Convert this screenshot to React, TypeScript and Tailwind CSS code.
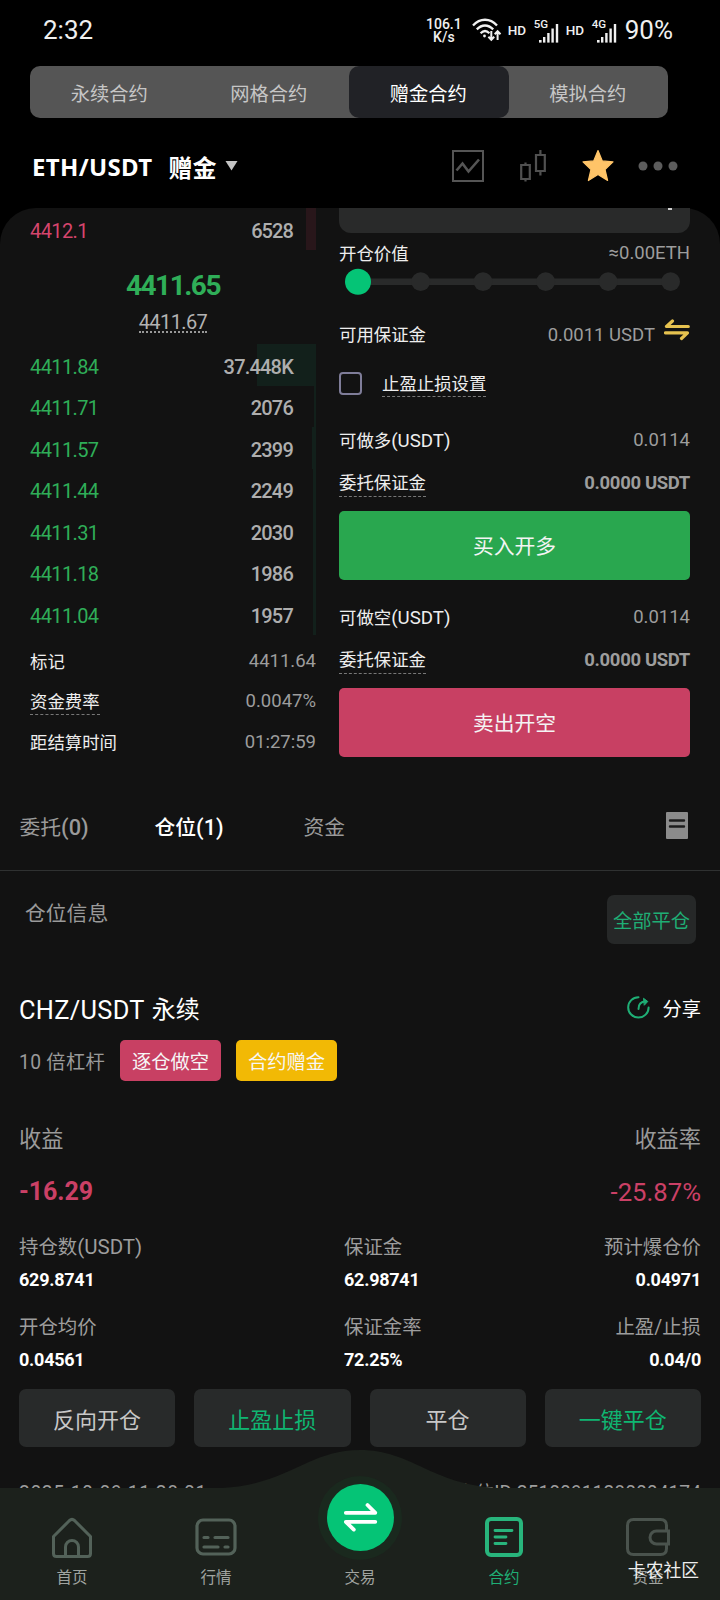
import type { ReactNode } from 'react';
import clsx from 'clsx';

const marketTabs = ['永续合约', '网格合约', '赠金合约', '模拟合约'];

const bids = [
  { price: '4411.84', amount: '37.448K', depth: 59 },
  { price: '4411.71', amount: '2076', depth: 2 },
  { price: '4411.57', amount: '2399', depth: 4 },
  { price: '4411.44', amount: '2249', depth: 3 },
  { price: '4411.31', amount: '2030', depth: 3 },
  { price: '4411.18', amount: '1986', depth: 3 },
  { price: '4411.04', amount: '1957', depth: 3 },
];

const positionActions = [
  { label: '反向开仓', green: false },
  { label: '止盈止损', green: true },
  { label: '平仓', green: false },
  { label: '一键平仓', green: true },
];

function SignalBars() {
  return (
    <svg className="absolute bottom-0 right-0" width="20" height="20" viewBox="0 0 20 20" fill="#f0f0f0">
      <rect x="0" y="17" width="2.6" height="2.6" />
      <rect x="4" y="14" width="2.4" height="5.6" />
      <rect x="8.2" y="10" width="2.4" height="9.6" />
      <rect x="12.4" y="5.5" width="2.4" height="14.1" />
      <rect x="16.8" y="1" width="2.4" height="18.6" />
    </svg>
  );
}

function StatusBar() {
  return (
    <div className="flex h-[66px] items-start justify-between pl-[43px] pr-[47px] pt-[15px] text-[#f0f0f0]">
      <span className="text-[26px] leading-[30px]">2:32</span>
      <div className="flex h-[30px] items-center">
        <div className="mr-[10px] pt-[1px] text-center text-[14px] font-medium leading-[12.5px]">
          <div>106.1</div>
          <div>K/s</div>
        </div>
        <svg className="mr-[6px]" width="30" height="24" viewBox="0 0 30 24" fill="none" stroke="#f0f0f0" strokeWidth="2.3">
          <path d="M1 7.5C8-.2 18-.2 25 7.5" />
          <path d="M4.8 11.4c5-5.2 11.4-5.2 16.4 0" />
          <path d="M8.6 15.2c2.8-2.8 6-2.8 8.8 0" />
          <circle cx="12.5" cy="18" r="1.4" fill="#f0f0f0" stroke="none" />
          <path d="M19.3 13v8.5M16.4 18.8l2.9 3 2.9-3M25.6 22v-8.5M22.7 16.2l2.9-3 2.9 3" strokeWidth="2" />
        </svg>
        <span className="w-[19px] text-[13.5px] font-medium">HD</span>
        <div className="relative ml-[7px] h-[25px] w-[25px]">
          <span className="absolute left-0 top-0 text-[11.5px] font-medium leading-[13px]">5G</span>
          <SignalBars />
        </div>
        <span className="ml-[7px] w-[19px] text-[13.5px] font-medium">HD</span>
        <div className="relative ml-[7px] h-[25px] w-[25px]">
          <span className="absolute left-0 top-0 text-[11.5px] font-medium leading-[13px]">4G</span>
          <SignalBars />
        </div>
        <span className="ml-[8px] text-[26px] leading-[30px]">90%</span>
      </div>
    </div>
  );
}

function MarketTabs() {
  return (
    <div className="ml-[30px] flex h-[52px] w-[638px] rounded-[10px] bg-[#555555]">
      {marketTabs.map((tab) => (
        <div
          key={tab}
          className={clsx(
            'flex flex-1 items-center justify-center rounded-[10px] pr-[1px] pt-[6px] text-[19.3px]',
            tab === '赠金合约' ? 'bg-[#212226] text-white' : 'text-[#c6c6c6]',
          )}
        >
          {tab}
        </div>
      ))}
    </div>
  );
}

function PairHeader() {
  return (
    <div className="flex h-[90px] items-center pl-[32px] pr-[42px] pt-[5px]">
      <span className="pt-[2px] font-['Noto_Sans','Noto_Sans_CJK_SC',sans-serif] text-[24px] font-bold tracking-[0.35px] text-white">ETH/USDT</span>
      <span className="ml-[16px] pt-[2px] font-['Noto_Sans_CJK_SC',sans-serif] text-[24px] font-bold text-white">赠金</span>
      <svg className="ml-[9px]" width="13" height="10" viewBox="0 0 13 10">
        <path d="M.5 0h12l-6 9.6z" fill="#c4c4c4" />
      </svg>
      <div className="ml-auto flex items-center">
        <svg className="mr-[36px]" width="32" height="32" viewBox="0 0 32 32" fill="none" stroke="#555555" strokeWidth="2">
          <rect x="1" y="1" width="30" height="30" />
          <path d="M4.5 20.5l6-7 6 8L27 9.5" strokeWidth="2.6" />
        </svg>
        <svg className="mr-[36px]" width="26" height="32" viewBox="0 0 26 32" fill="none" stroke="#505050" strokeWidth="2.2">
          <path d="M1.2 15h8.6v14H1.2zM5.5 12.5V15M5.5 29v2.6M16 5h8.8v16H16zM20.4 0v5M20.4 21v4.5" />
        </svg>
        <svg className="mr-[24px]" width="32" height="33" viewBox="0 0 32 33">
          <path
            d="M16 1.5l4.3 10.4 10.7 1-8 7.6 2.6 11L16 25.4 6.4 31.5l2.6-11-8-7.6 10.7-1z"
            fill="#ffc468"
            stroke="#ffc468"
            strokeWidth="1.2"
            strokeLinejoin="round"
          />
        </svg>
        <svg width="40" height="10" viewBox="0 0 40 10" fill="#5c5c5c">
          <circle cx="5" cy="5" r="4.5" />
          <circle cx="20" cy="5" r="4.5" />
          <circle cx="35" cy="5" r="4.5" />
        </svg>
      </div>
    </div>
  );
}

function InfoRow({ label, value, dashed }: { label: string; value: string; dashed?: boolean }) {
  return (
    <div className="flex h-[40.5px] items-center justify-between">
      <span className={clsx('text-[17.4px] leading-[24px] text-[#eeeeee]', dashed && 'border-b border-dashed border-[#777]')}>
        {label}
      </span>
      <span className="text-[18.5px] text-[#9d9d9d]">{value}</span>
    </div>
  );
}

function OrderBook() {
  return (
    <div className="w-[286px] shrink-0">
      <div className="relative flex h-[42px] items-center justify-between pr-[23px] pt-[4px] text-[20px] tracking-[-0.6px]">
        <div className="absolute right-0 top-0 h-full w-[10px] bg-[#28161a]" />
        <span className="text-[#d5456d]">4412.1</span>
        <span className="font-medium tracking-[-0.9px] text-[#aeaeae]">6528</span>
      </div>
      <div className="mt-[16px] text-center text-[28px] font-bold leading-[40px] tracking-[-1.5px] text-[#2fae58]">4411.65</div>
      <div className="flex justify-center">
        <span className="mt-[4px] h-[23px] border-b-2 border-dotted border-[#999] text-[20px] leading-[24px] tracking-[-0.6px] text-[#b3b3b3]">
          4411.67
        </span>
      </div>
      <div className="mt-[11px]">
        {bids.map((bid) => (
          <div
            key={bid.price}
            className="relative flex h-[41.5px] items-center justify-between pr-[23px] pt-[4px] text-[20px] tracking-[-0.6px]"
          >
            <div className="absolute right-0 top-0 h-full bg-[#12201b]" style={{ width: bid.depth }} />
            <span className="text-[#2fae58]">{bid.price}</span>
            <span className="relative font-medium tracking-[-0.8px] text-[#aeaeae]">{bid.amount}</span>
          </div>
        ))}
      </div>
      <div className="mt-[7px]">
        <InfoRow label="标记" value="4411.64" />
        <InfoRow label="资金费率" value="0.0047%" dashed />
        <InfoRow label="距结算时间" value="01:27:59" />
      </div>
    </div>
  );
}

function FormRow({ label, unit, className, dashed, children }: { label: string; unit?: string; className: string; dashed?: boolean; children: ReactNode }) {
  return (
    <div className={clsx('flex h-[30px] items-center justify-between text-[18.5px] text-[#9d9d9d]', className)}>
      <span className={clsx('text-[17.4px] leading-[25px] text-[#eeeeee]', dashed && 'border-b border-dashed border-[#777]')}>
        {label}
        {unit && <span className="text-[18.7px]">{unit}</span>}
      </span>
      {children}
    </div>
  );
}

function AmountSlider() {
  return (
    <div className="-mt-px flex h-[27px] items-center pl-[6px]">
      <svg width="345" height="27" viewBox="0 0 345 27" fill="#292a2a">
        <rect x="13" y="10.5" width="313" height="6.5" />
        {[75.7, 138, 200.7, 263.2, 325.6].map((cx) => (
          <circle key={cx} cx={cx} cy="13.7" r="9.4" />
        ))}
        <circle cx="13" cy="13.7" r="13" fill="#05c476" />
      </svg>
    </div>
  );
}

function OrderForm() {
  return (
    <div className="w-[351px] shrink-0">
      <div className="flex h-[25px] justify-end rounded-b-[12px] bg-[#292a2a] pr-[18px]">
        <div className="h-[2px] w-[4px] bg-[#d0d0d0]" />
      </div>
      <FormRow label="开仓价值" className="mt-[6px]">
        <span>≈0.00ETH</span>
      </FormRow>
      <AmountSlider />
      <FormRow label="可用保证金" className="mt-[25px]">
        <span className="ml-auto pt-px">0.0011 USDT</span>
        <svg className="ml-[9px] mb-[11px]" width="26" height="22" viewBox="0 0 26 22" fill="none" stroke="#e6c24f" strokeWidth="3.2" strokeLinecap="round" strokeLinejoin="round">
          <path d="M8.5 2L2.5 7.5h21.8M1.5 13.8h22L17.5 19.5" />
        </svg>
      </FormRow>
      <div className="mt-[21px] flex h-[25px] items-center">
        <div className="h-[23px] w-[23px] rounded-[4px] border-2 border-[#7f7d99]" />
        <span className="ml-[20px] mt-[2px] border-b border-dashed border-[#777] text-[17.4px] leading-[24px] text-[#eeeeee]">止盈止损设置</span>
      </div>
      <FormRow label="可做多" unit="(USDT)" className="mt-[30px]">
        <span className="pb-[1px]">0.0114</span>
      </FormRow>
      <FormRow label="委托保证金" className="mt-[13px]" dashed>
        <span className="font-bold tracking-[-0.35px]">0.0000 USDT</span>
      </FormRow>
      <button className="mt-[12px] h-[69px] w-full rounded-[5px] bg-[#29a74f] pt-[5px] text-[20.8px] text-[#f4f4f4]">买入开多</button>
      <FormRow label="可做空" unit="(USDT)" className="mt-[23px]">
        <span className="pb-[1px]">0.0114</span>
      </FormRow>
      <FormRow label="委托保证金" className="mt-[13px]" dashed>
        <span className="font-bold tracking-[-0.35px]">0.0000 USDT</span>
      </FormRow>
      <button className="mt-[12px] h-[69px] w-full rounded-[5px] bg-[#c84063] pt-[5px] text-[20.8px] text-[#f4f4f4]">卖出开空</button>
    </div>
  );
}

function PositionTabs() {
  return (
    <div className="mt-[24px] flex h-[84px] items-center border-b border-[#2f3131] pl-[19.5px] text-[20.8px] text-[#9a9a9a]">
      <span className="w-[135px]">委托<b className="text-[21.8px] font-medium">(0)</b></span>
      <span className="w-[149px] font-medium text-white">仓位<b className="text-[21.8px] font-medium">(1)</b></span>
      <span>资金</span>
      <svg className="ml-auto mr-[32px] mb-[7px]" width="22" height="27" viewBox="0 0 22 27">
        <rect width="22" height="27" rx="1" fill="#8b8b8b" />
        <path d="M4 8.5h14M4 14.5h14" stroke="#1c1c1c" strokeWidth="2.4" strokeLinecap="round" />
      </svg>
    </div>
  );
}

function Stat({ label, unit, value, end }: { label: string; unit?: string; value: string; end?: boolean }) {
  return (
    <div className={clsx('flex flex-col', end && 'items-end')}>
      <span className="h-[32px] text-[19.4px] leading-[32px] text-[#9d9d9d]">
        {label}
        {unit && <span className="text-[20.5px] leading-none">{unit}</span>}
      </span>
      <span className="text-[18px] font-bold leading-[31px] tracking-[-0.25px] text-white">{value}</span>
    </div>
  );
}

function Position() {
  return (
    <div className="px-[19px]">
      <div className="flex h-[98px] items-start justify-between pl-[6px] pr-[5px] pt-[24px]">
        <span className="mt-[3px] text-[20.8px] leading-[32px] text-[#9a9a9a]">仓位信息</span>
        <button className="h-[49px] w-[89px] rounded-[7px] bg-[#262828] pt-[6px] text-[19.3px] text-[#1fae75]">全部平仓</button>
      </div>
      <div className="mt-[25px] flex h-[32px] items-center">
        <span className="text-[25.4px] tracking-[0.3px] text-white">CHZ/USDT</span>
        <span className="ml-[7px] text-[24px] text-white">永续</span>
        <svg className="ml-auto mr-[12px] mb-[5px]" width="23" height="23" viewBox="0 0 23 23" fill="none" stroke="#1fae75" strokeWidth="2" strokeLinecap="round">
          <path d="M11.5 1.2A10.2 10.2 0 1 0 21.6 11.4" />
          <path d="M11.5 13c0-5 2-7.500 7-7.500" />
          <path d="M16.8 2.5l4 3-3.300 3.500z" fill="#1fae75" strokeWidth="1" />
        </svg>
        <span className="text-[19.3px] text-white">分享</span>
      </div>
      <div className="mt-[14px] flex h-[41px] items-center text-[19.3px]">
        <span className="w-[101px] pt-[5px] tracking-[0.3px] text-[#9a9a9a]">10 倍杠杆</span>
        <span className="mr-[15px] flex h-[41px] w-[101px] items-center justify-center rounded-[5px] bg-[#c84063] pt-[6px] text-[#f6f6f6]">逐仓做空</span>
        <span className="flex h-[41px] w-[101px] items-center justify-center rounded-[5px] bg-[#f2b905] pt-[6px] text-[#f6f6f6]">合约赠金</span>
      </div>
      <div className="mt-[42px] flex justify-between text-[22.2px] leading-[32px] text-[#9a9a9a]">
        <span>收益</span>
        <span>收益率</span>
      </div>
      <div className="mt-[21px] flex justify-between leading-[32px] text-[#cb4066]">
        <span className="text-[25px] font-bold tracking-[-0.1px]">-16.29</span>
        <span className="text-[25.7px]">-25.87%</span>
      </div>
      <div className="mt-[24px] grid grid-cols-[325px_1fr_auto] gap-y-[17px]">
        <Stat label="持仓数" unit="(USDT)" value="629.8741" />
        <Stat label="保证金" value="62.98741" />
        <Stat label="预计爆仓价" value="0.04971" end />
        <Stat label="开仓均价" value="0.04561" />
        <Stat label="保证金率" value="72.25%" />
        <Stat label="止盈/止损" value="0.04/0" end />
      </div>
      <div className="mt-[14px] grid grid-cols-4 gap-[19px]">
        {positionActions.map((action) => (
          <button
            key={action.label}
            className={clsx('h-[58px] rounded-[7px] bg-[#282a2a] pt-[4px] text-[22px]', action.green ? 'text-[#0fb672]' : 'text-[#c8c8c8]')}
          >
            {action.label}
          </button>
        ))}
      </div>
      <div className="mt-[34px] flex justify-between whitespace-nowrap text-[19.3px] leading-[26px] text-[#9d9d9d]">
        <span className="tracking-[0.6px]">2025-10-09 11:28:01</span>
        <span>仓位ID:25100911280004174</span>
      </div>
    </div>
  );
}

function NavItem({ label, active, children }: { label: string; active?: boolean; children: ReactNode }) {
  return (
    <div className={clsx('flex w-[144px] flex-col items-center text-[15.5px]', active ? 'text-[#1fae75]' : 'text-[#a0a4a0]')}>
      <div className="flex h-[42px] items-center">{children}</div>
      <span className="mt-[8px] leading-[22px]">{label}</span>
    </div>
  );
}

function BottomNav() {
  return (
    <div className="absolute inset-x-0 bottom-0 h-[150px]">
      <svg className="absolute inset-0" width="720" height="150" viewBox="0 0 720 150">
        <path d="M0 38H222C290 34 308 0 360 0S430 34 498 38H720V150H0z" fill="#1c211c" />
      </svg>
      <div className="relative flex pt-[67px]">
        <NavItem label="首页">
          <svg width="42" height="42" viewBox="0 0 42 42" fill="none" stroke="#536259" strokeWidth="3" strokeLinejoin="round">
            <path d="M2.5 19.5L18.5 3.5q2.5-2.2 5 0L39.5 19.5V36.5q0 3-3 3h-31q-3 0-3-3z" />
            <path d="M14.5 39V30a6.5 6.5 0 0 1 13 0v9" />
          </svg>
        </NavItem>
        <NavItem label="行情">
          <svg className="-mt-[2px]" width="42" height="38" viewBox="0 0 42 38" fill="none" stroke="#536259" strokeWidth="3.2" strokeLinecap="round">
            <rect x="2" y="2" width="38" height="34" rx="6" />
            <path d="M9 19.5h4M20 19.5h13M9 29h14M30 29h3" />
          </svg>
        </NavItem>
        <NavItem label="交易">
          <div className="-mt-[41px] flex h-[84px] w-[84px] shrink-0 items-center justify-center rounded-full bg-[#1a291e]">
            <svg width="67" height="67" viewBox="0 0 67 67">
              <circle cx="33.5" cy="33.5" r="33.5" fill="#05c476" />
              <path d="M18.800 28.800h29.500L40.500 21M48.300 37.800H18.800l8 7.800" fill="none" stroke="#fff" strokeWidth="3.8" strokeLinecap="round" strokeLinejoin="round" />
            </svg>
          </div>
        </NavItem>
        <NavItem label="合约" active>
          <svg className="-mt-[2px]" width="38" height="40" viewBox="0 0 38 40" fill="none" stroke="#28b57c" strokeWidth="4" strokeLinecap="round">
            <rect x="2" y="2" width="34" height="36" rx="4" />
            <path d="M10 13.5h17M10 20h11M10 26.5h11" strokeWidth="2.8" />
          </svg>
        </NavItem>
        <NavItem label="资金">
          <svg className="-mt-[2px]" width="44" height="38" viewBox="0 0 44 38" fill="none" stroke="#4a534d" strokeWidth="3">
            <path d="M40.5 13V7.5q0-6-6-6h-27q-6 0-6 6v23q0 6 6 6h27q6 0 6-6V26" />
            <path d="M42.5 13H30.5a6.5 6.5 0 0 0 0 13h12z" />
          </svg>
        </NavItem>
      </div>
      <span className="absolute bottom-[16px] right-[21px] text-[17.8px] leading-[26px] text-[#eeeeee]">卡农社区</span>
    </div>
  );
}

export default function App() {
  return (
    <div className="relative h-[1600px] w-[720px] overflow-hidden bg-black font-[Roboto,'Noto_Sans_CJK_SC',sans-serif]">
      <StatusBar />
      <MarketTabs />
      <PairHeader />
      <div className="h-[1392px] rounded-t-[36px] bg-[#121212]">
        <div className="flex justify-between pl-[30px] pr-[30px]">
          <OrderBook />
          <OrderForm />
        </div>
        <PositionTabs />
        <Position />
      </div>
      <BottomNav />
    </div>
  );
}
